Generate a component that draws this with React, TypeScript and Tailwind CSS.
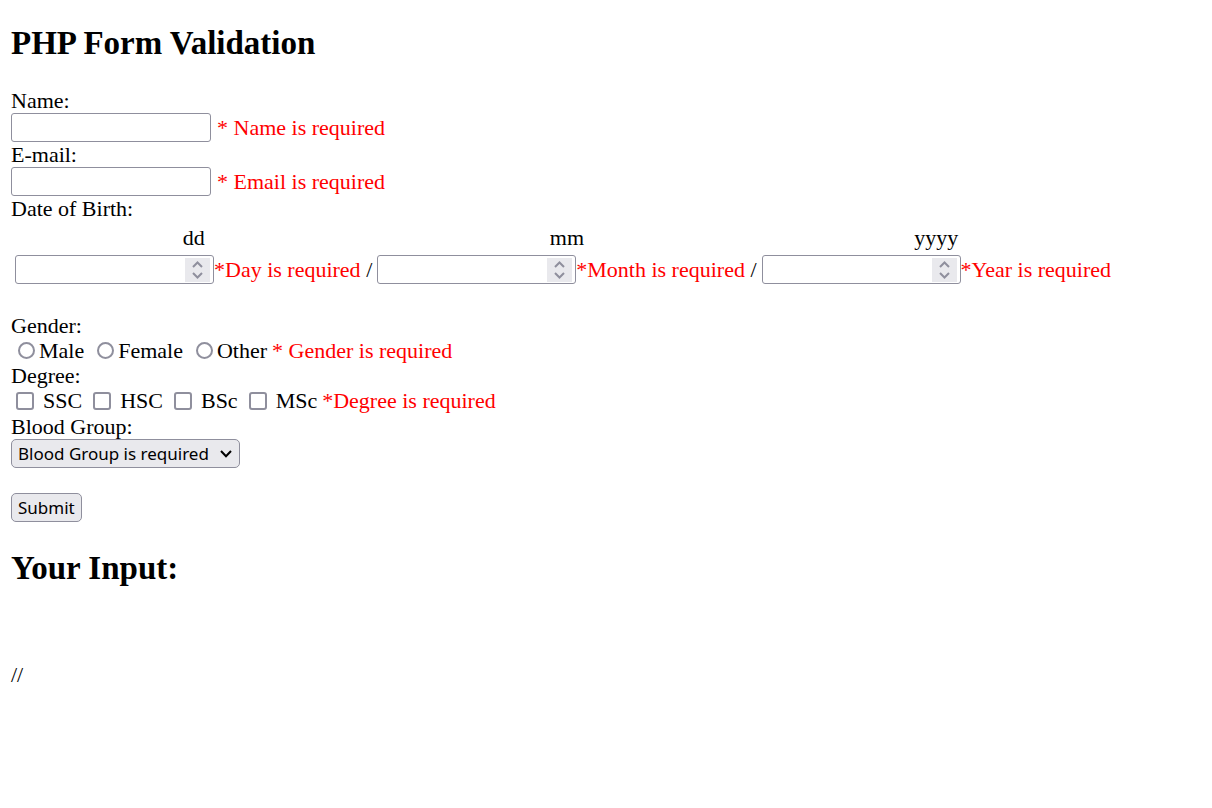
import { useRef } from 'react';
import type { ReactNode } from 'react';

const boxClass = 'h-[29px] w-[200px] rounded-[3px] border border-[#8f8f9d] bg-white px-1 text-lg';

function Message({ children }: { children: ReactNode }) {
  return <span className="text-[#ff0000]">{children}</span>;
}

function TextField({ id, label, type, message }: { id: string; label: string; type: string; message: string }) {
  return (
    <div>
      <label htmlFor={id} className="block">{label}</label>
      <div className="flex items-center gap-[6px]">
        <input id={id} name={id} type={type} className={boxClass} />
        <Message>{message}</Message>
      </div>
    </div>
  );
}

function NumberField({ id, message, last }: { id: string; message: string; last?: boolean }) {
  const ref = useRef<HTMLInputElement>(null);
  return (
    <div className="flex items-center whitespace-pre">
      <div className="flex h-[29px] w-[199px] items-center rounded-[3px] border border-[#8f8f9d] bg-white pr-[3px]">
        <input
          ref={ref}
          id={id}
          name={id}
          type="number"
          aria-labelledby={`${id}-label`}
          className="h-full min-w-0 flex-1 appearance-none bg-transparent px-1 text-lg outline-none [appearance:textfield]"
        />
        <span className="flex h-6 w-[25px] flex-col bg-[#e9e9ed] text-[#8f8f9d]">
          <button type="button" tabIndex={-1} aria-label="Increase" onClick={() => ref.current?.stepUp()} className="flex h-3 items-end justify-center pb-[2px]">
            <svg width="11" height="7" viewBox="0 0 11 7" fill="none" stroke="currentColor" strokeWidth="2"><path d="M1 6 5.5 1.5 10 6" /></svg>
          </button>
          <button type="button" tabIndex={-1} aria-label="Decrease" onClick={() => ref.current?.stepDown()} className="flex h-3 items-start justify-center pt-[2px]">
            <svg width="11" height="7" viewBox="0 0 11 7" fill="none" stroke="currentColor" strokeWidth="2"><path d="M1 1 5.5 5.5 10 1" /></svg>
          </button>
        </span>
      </div>
      <Message>{message}</Message>
      {!last && ' /'}
    </div>
  );
}

const dateParts = [
  { id: 'day', label: 'dd', message: '*Day is required' },
  { id: 'month', label: 'mm', message: '*Month is required' },
  { id: 'year', label: 'yyyy', message: '*Year is required' },
];

export default function App() {
  return (
    <main className="px-[11px] pb-6 pt-[25px] font-['Liberation_Serif',serif] text-[22px] leading-[25px] text-black">
      <h2 className="mb-[26px] text-[33px] font-bold leading-[37px]">PHP Form Validation</h2>
      <form onSubmit={(e) => e.preventDefault()}>
        <TextField id="name" label="Name:" type="text" message="* Name is required" />
        <TextField id="email" label="E-mail:" type="email" message="* Email is required" />

        <div>Date of Birth:</div>
        <table className="border-separate border-spacing-[3px]">
          <thead>
            <tr>
              {dateParts.map((p) => (
                <th key={p.id} id={`${p.id}-label`} scope="col" className="p-px text-center font-normal">{p.label}</th>
              ))}
            </tr>
          </thead>
          <tbody>
            <tr>
              {dateParts.map((p) => (
                <td key={p.id} className="p-px">
                  <NumberField id={p.id} message={p.message} last={p.id === 'year'} />
                </td>
              ))}
            </tr>
          </tbody>
        </table>

        <fieldset className="mt-[25px]">
          <legend>Gender:</legend>
          <div className="flex items-center gap-[5px] pl-[7px]">
            <div className="flex gap-[13px]">
              {['Male', 'Female', 'Other'].map((g) => (
                <label key={g} className="flex items-center gap-1">
                  <input type="radio" name="gender" value={g} className="size-[17px] appearance-none rounded-full border-2 border-[#8f8f9d] bg-white checked:border-[5px] checked:border-[#0060df]" />
                  {g}
                </label>
              ))}
            </div>
            <Message>* Gender is required</Message>
          </div>
        </fieldset>

        <fieldset className="mb-px">
          <legend>Degree:</legend>
          <div className="flex items-center gap-[5px] pl-[5px]">
            <div className="flex gap-[11px]">
              {['SSC', 'HSC', 'BSc', 'MSc'].map((d) => (
                <label key={d} className="flex items-center gap-[9px]">
                  <input type="checkbox" name="degree" value={d} className="size-[18px] appearance-none rounded-[3px] border-2 border-[#8f8f9d] bg-white checked:bg-[#0060df]" />
                  {d}
                </label>
              ))}
            </div>
            <Message>*Degree is required</Message>
          </div>
        </fieldset>

        <label htmlFor="blood" className="block">Blood Group:</label>
        <div className="grid w-fit items-center">
          <select id="blood" name="blood" className="col-start-1 row-start-1 h-[29px] appearance-none rounded-[5px] border border-[#8f8f9d] bg-[#e9e9ed] pl-[6px] pr-[30px] font-['Noto_Sans',sans-serif] text-[17px] leading-[27px]">
            <option>Blood Group is required</option>
            <option>A+</option>
            <option>B+</option>
            <option>AB+</option>
            <option>O+</option>
          </select>
          <svg className="pointer-events-none col-start-1 row-start-1 mr-2 justify-self-end" width="12" height="8" viewBox="0 0 12 8" fill="none" stroke="currentColor" strokeWidth="2"><path d="M1 1 6 6.3 11 1" /></svg>
        </div>
        <button type="submit" className="mt-[25px] block h-[29px] rounded-[5px] border border-[#8f8f9d] bg-[#e9e9ed] px-[6px] font-['Noto_Sans',sans-serif] text-[17px] leading-[27px]">Submit</button>
      </form>
      <h2 className="mb-[75px] mt-7 text-[33px] font-bold leading-[37px]">Your Input:</h2>
      <p>//</p>
    </main>
  );
}
